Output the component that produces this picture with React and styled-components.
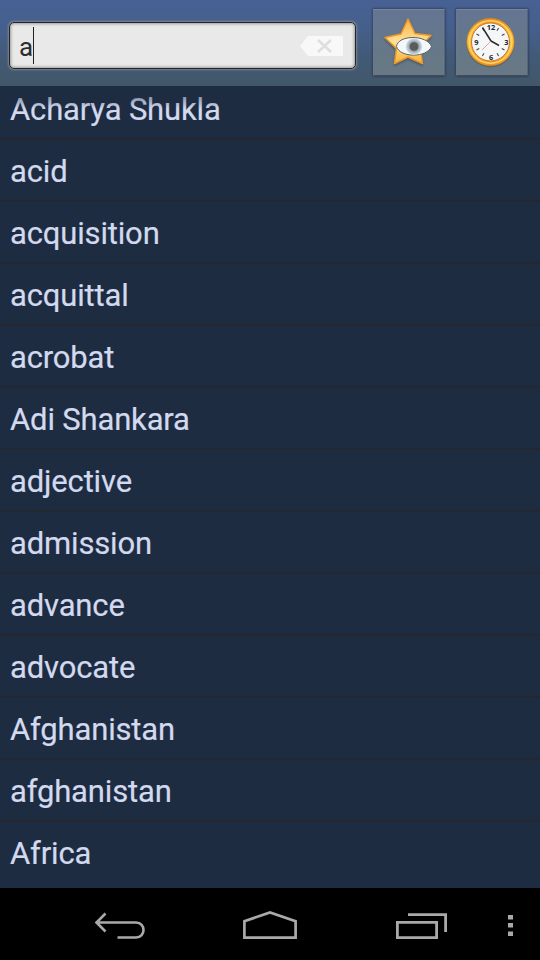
import React from "react";
import styled, { createGlobalStyle } from "styled-components";

const GlobalStyle = createGlobalStyle`
  * { box-sizing: border-box; }
  body { margin: 0; background: #000; font-family: Roboto, "Liberation Sans", sans-serif; }
`;

const Screen = styled.div`
  width: 540px;
  height: 960px;
  display: flex;
  flex-direction: column;
  overflow: hidden;
  background: #1d2c41;
`;

const Header = styled.header`
  flex: none;
  height: 86px;
  display: flex;
  padding: 9px 12px 0 9px;
  background: linear-gradient(#476194 0%, #455f8c 35%, #425a78 65%, #425768 100%);
`;

const SearchField = styled.div`
  flex: none;
  width: 347px;
  height: 47px;
  margin: 13px 17px 0 0;
  padding: 0 11px 0 9px;
  display: flex;
  align-items: center;
  border: 1px solid #20242f;
  border-radius: 5px;
  background: #e9e9e9;
  box-shadow: 0 0 2px 1px rgba(150, 148, 145, 0.75), inset 0 0 3px 1px rgba(110, 105, 100, 0.6);
`;

const Query = styled.span`
  padding-top: 2px;
  font-size: 26px;
  line-height: 36px;
  color: #2e2e2b;
`;

const Caret = styled.span`
  width: 1px;
  height: 37px;
  margin-right: auto;
  background: #222;
`;

const ToolButton = styled.button`
  flex: none;
  width: 72px;
  height: 67px;
  margin: 0 11px 0 0;
  padding: 0;
  display: flex;
  align-items: center;
  justify-content: center;
  border: 1px solid;
  border-color: #7c8796 #56657a #3f4c5c #6b788c;
  border-radius: 1px;
  background: linear-gradient(#647593, #667888 60%, #687984);
  box-shadow: 0 0 2px 1px rgba(37, 50, 75, 0.55);
`;

const WordList = styled.ul`
  flex: none;
  position: relative;
  height: 802px;
  margin: 0;
  padding: 0;
  display: flex;
  flex-direction: column;
  justify-content: flex-end;
  list-style: none;
  overflow: hidden;

  &::before {
    content: "";
    position: absolute;
    inset: 0 0 auto;
    z-index: 1;
    height: 23px;
    background: linear-gradient(rgba(29, 44, 65, 0.75), rgba(29, 44, 65, 0));
  }
`;

const Word = styled.li`
  flex: none;
  height: 62px;
  padding: 1px 0 0 10px;
  box-shadow: inset 0 -1px #29272b, inset 0 -2px #1f2836;
  color: #d3d9ee;
  font-size: 31px;
  line-height: 61px;
  letter-spacing: -0.16px;
  -webkit-text-stroke: 0.2px #d3d9ee;
  white-space: nowrap;

  &:last-child { height: 66px; box-shadow: none; }
`;

const NavBar = styled.nav`
  flex: none;
  height: 72px;
  display: flex;
  align-items: center;
  background: #000;
`;

const NavSlot = styled.div`
  flex: none;
  width: ${(p) => p.$width}px;
  height: 72px;
  padding-left: ${(p) => p.$inset ?? 0}px;
`;

const words = [
  "Acharya Shukla", "acid", "acquisition", "acquittal", "acrobat",
  "Adi Shankara", "adjective", "admission", "advance", "advocate",
  "Afghanistan", "afghanistan", "Africa",
];

function ClearIcon() {
  return (
    <svg width="44" height="22" viewBox="0 0 44 22">
      <path d="M0 11 L8 1 H43 V21 H8 Z" fill="#f8f8f8" />
      <path d="M18 5 L31 17 M31 5 L18 17" stroke="#dedede" strokeWidth="2.6" />
    </svg>
  );
}

function StarIcon() {
  return (
    <svg width="70" height="65" viewBox="374 10 70 65">
      <defs>
        <linearGradient id="star" x1="0" y1="0" x2="0" y2="1">
          <stop offset="0" stopColor="#f8b13c" />
          <stop offset=".5" stopColor="#ffe095" />
          <stop offset="1" stopColor="#fbb338" />
        </linearGradient>
        <radialGradient id="iris">
          <stop offset="0" stopColor="#4d4d4d" />
          <stop offset=".42" stopColor="#626262" />
          <stop offset=".65" stopColor="#a2b1bb" />
          <stop offset="1" stopColor="#d5dfe5" />
        </radialGradient>
        <filter id="drop" x="-20%" y="-20%" width="140%" height="150%">
          <feDropShadow dx="0" dy="1.5" stdDeviation="1" floodColor="#333c48" floodOpacity=".65" />
        </filter>
      </defs>
      <path
        d="M408 19 L415 33.5 L431 35.5 L420 46.5 L422.5 63.5 L408 57 L394.5 63.5 L396.5 48.5 L385 37.5 L401 34 Z"
        fill="url(#star)" stroke="#e9982b" strokeWidth="1.4" strokeLinejoin="round" filter="url(#drop)"
      />
      <path d="M396.5 46.5 C398 34.5 427 34.5 431.5 46.5 C427 58 400 58 396.5 46.5 Z" fill="#f5f8fa" stroke="#586169" strokeWidth="1" />
      <circle cx="414" cy="46.5" r="8.2" fill="url(#iris)" />
      <circle cx="414" cy="46.5" r="4" fill="#5b5b5b" />
    </svg>
  );
}

const ticks = [30, 60, 120, 150, 210, 240, 300, 330];

const Numeral = styled.text`
  font: 700 7.4px "Open Sans", sans-serif;
  fill: #20242b;
  text-anchor: middle;
`;

function ClockIcon() {
  return (
    <svg width="70" height="65" viewBox="457 10 70 65">
      <defs>
        <linearGradient id="rim" x1="0" y1="0" x2="0" y2="1">
          <stop offset="0" stopColor="#ec8b1e" />
          <stop offset=".4" stopColor="#ffbe3c" />
          <stop offset="1" stopColor="#f2951f" />
        </linearGradient>
      </defs>
      <ellipse cx="490.5" cy="43.5" rx="24" ry="23.8" fill="#424d59" opacity=".5" />
      <circle cx="490.5" cy="42" r="23.7" fill="url(#rim)" stroke="#cf831f" strokeWidth=".6" />
      <circle cx="490.5" cy="42" r="21.2" fill="none" stroke="#ffd466" strokeWidth="1.6" />
      <circle cx="490.5" cy="42" r="19" fill="#f4f6f8" stroke="#c27c25" strokeWidth="1" />
      {ticks.map((angle) => (
        <path key={angle} d="M490.5 25.8 v3.2" stroke="#454950" strokeWidth="1.1" transform={`rotate(${angle} 490.5 42)`} />
      ))}
      <Numeral x="491" y="29.8">12</Numeral>
      <Numeral x="506.3" y="44.7">3</Numeral>
      <Numeral x="491" y="59.8">6</Numeral>
      <Numeral x="476.3" y="44.7">9</Numeral>
      <path d="M490.5 41.5 L482 50" stroke="#e9a19b" strokeWidth="1" />
      <path d="M491 41 L482.5 27.5 M491 41 L499 45.5" stroke="#292d32" strokeWidth="1.5" />
    </svg>
  );
}

function BackIcon() {
  return (
    <svg width="60" height="72" viewBox="90 888 60 72" fill="none" stroke="#a9a9a9" strokeWidth="2.6">
      <path d="M105.5 913.5 L96.5 922.5 L105.5 931.5 M97 922.5 H136 C146 922.5 146 937.5 136 937.5 H117.5" />
    </svg>
  );
}

function HomeIcon() {
  return (
    <svg width="60" height="72" viewBox="240 888 60 72" fill="none" stroke="#a9a9a9" strokeWidth="2.7">
      <path d="M244.4 937.6 V921.2 L270 912.4 L295.6 921.2 V937.6 Z" />
    </svg>
  );
}

function RecentsIcon() {
  return (
    <svg width="60" height="72" viewBox="390 888 60 72" fill="none" stroke="#a9a9a9" strokeWidth="2.8">
      <path d="M397.4 922.4 H436.6 V937.6 H397.4 Z M408 914.6 H445.6 V932" />
    </svg>
  );
}

function MenuIcon() {
  return (
    <svg width="12" height="72" viewBox="505 888 12 72" fill="#a9a9a9">
      <path d="M508 915 h5 v4.5 h-5z M508 923 h5 v4.5 h-5z M508 931.5 h5 v4.5 h-5z" />
    </svg>
  );
}

export default function App() {
  return (
    <>
      <GlobalStyle />
      <Screen>
        <Header>
          <SearchField>
            <Query>a</Query>
            <Caret />
            <ClearIcon />
          </SearchField>
          <ToolButton aria-label="Favorites"><StarIcon /></ToolButton>
          <ToolButton aria-label="History"><ClockIcon /></ToolButton>
        </Header>
        <WordList>
          {words.map((word) => <Word key={word}>{word}</Word>)}
        </WordList>
        <NavBar>
          <NavSlot $width={240} $inset={90}><BackIcon /></NavSlot>
          <NavSlot $width={150}><HomeIcon /></NavSlot>
          <NavSlot $width={115}><RecentsIcon /></NavSlot>
          <NavSlot $width={35}><MenuIcon /></NavSlot>
        </NavBar>
      </Screen>
    </>
  );
}
